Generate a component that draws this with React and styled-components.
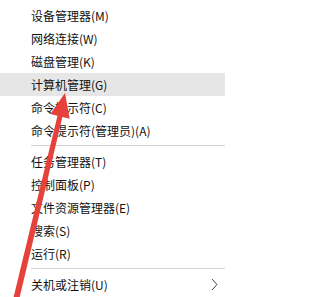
import React from "react";
import styled, { createGlobalStyle } from "styled-components";

const Global = createGlobalStyle`
  html, body { margin: 0; padding: 0; background: #fff; }
  body { width: 225px; height: 297px; overflow: hidden; }
`;

const Stage = styled.div`
  position: relative;
  width: 225px;
  height: 297px;
  overflow: hidden;
  background: #ffffff;
`;

const Menu = styled.ul`
  list-style: none;
  margin: 0;
  padding: 4px 0 0 0;
  display: flex;
  flex-direction: column;
  font-family: "Noto Sans CJK SC", "Noto Sans", sans-serif;
  font-size: 12px;
  color: #111;
`;

const Item = styled.li`
  height: 23px;
  display: flex;
  align-items: center;
  justify-content: space-between;
  padding: 0 7px 0 31px;
  background: ${(p) => (p.$active ? "#e6e6e6" : "transparent")};
  white-space: nowrap;
`;

const Separator = styled.li`
  height: 1px;
  margin: 3px 0 4px 31px;
  background: #d4d4d4;
`;

const Chevron = styled.svg`
  width: 7px;
  height: 13px;
  flex: none;
`;

const Annotation = styled.svg`
  position: absolute;
  left: 0;
  top: 0;
  width: 225px;
  height: 297px;
  pointer-events: none;
`;

const groups = [
  [
    { label: "设备管理器(M)" },
    { label: "网络连接(W)" },
    { label: "磁盘管理(K)" },
    { label: "计算机管理(G)", active: true },
    { label: "命令提示符(C)" },
    { label: "命令提示符(管理员)(A)" },
  ],
  [
    { label: "任务管理器(T)" },
    { label: "控制面板(P)" },
    { label: "文件资源管理器(E)" },
    { label: "搜索(S)" },
    { label: "运行(R)" },
  ],
  [{ label: "关机或注销(U)", sub: true }],
];

export default function App() {
  return (
    <Stage>
      <Global />
      <Menu>
        {groups.map((g, gi) => (
          <React.Fragment key={gi}>
            {gi > 0 && <Separator />}
            {g.map((it) => (
              <Item key={it.label} $active={it.active}>
                <span>{it.label}</span>
                {it.sub && (
                  <Chevron viewBox="0 0 7 13">
                    <polyline points="1,1 6,6.5 1,12" fill="none" stroke="#444" strokeWidth="1" />
                  </Chevron>
                )}
              </Item>
            ))}
          </React.Fragment>
        ))}
      </Menu>
      <Annotation viewBox="0 0 225 297">
        <polygon
          points="65,93 69.7,118.8 62.4,117 17.6,306 11.8,304.6 57.5,115.8 50.3,114.1"
          fill="#e6413a"
        />
      </Annotation>
    </Stage>
  );
}
